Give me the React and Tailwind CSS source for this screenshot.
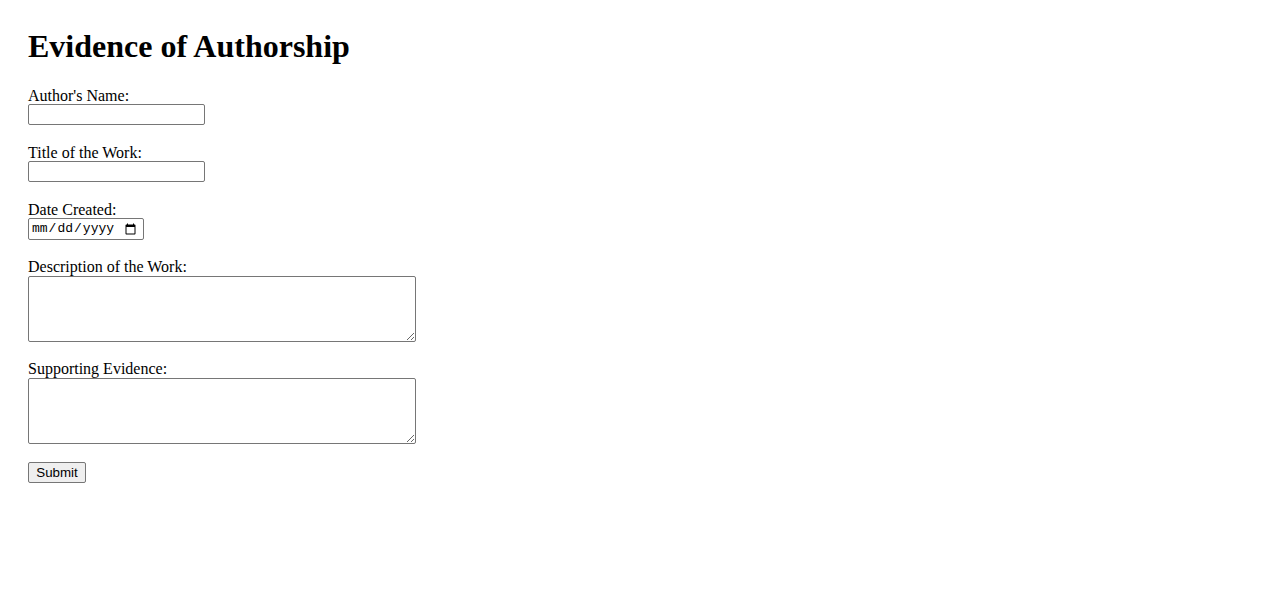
const serif = { fontFamily: '"Liberation Serif", "Times New Roman", serif' }

const Field = ({ label, children, className = '' }) => {
  return (
    <div className={`flex flex-col items-start ${className}`}>
      <label className="block pt-[3px] text-[16px] leading-[15px] text-black">{label}</label>
      {children}
    </div>
  )
}

const inputCls =
  'mt-[1px] h-[21px] w-[177px] rounded-[2px] border border-[#767676] bg-white px-[2px] text-[13.33px] outline-none'

const App = () => {
  return (
    <div className="min-h-screen bg-white pl-[28px] pt-[28px] text-black" style={serif}>
      <h1 className="mb-[20px] text-[32px] font-bold leading-[37px]">Evidence of Authorship</h1>

      <form className="flex flex-col items-start">
        {/* name */}
        <Field label="Author's Name:">
          <input type="text" className={inputCls} />
        </Field>

        {/* title */}
        <Field label="Title of the Work:" className="mt-[17px]">
          <input type="text" className={inputCls} />
        </Field>

        {/* date */}
        <Field label="Date Created:" className="mt-[17px]">
          <input
            type="date"
            className="mt-[1px] h-[22px] w-[116px] rounded-[2px] border border-[#767676] bg-white pl-[2px] pr-[4px] text-[13px] outline-none"
            style={{ fontFamily: '"Liberation Mono", "DejaVu Sans Mono", monospace' }}
          />
        </Field>

        {/* description */}
        <Field label="Description of the Work:" className="mt-[16px]">
          <textarea className="mt-[2px] h-[66px] w-[388px] rounded-[2px] border border-[#767676] bg-white p-[2px] text-[13px] outline-none" />
        </Field>

        {/* evidence */}
        <Field label="Supporting Evidence:" className="mt-[16px]">
          <textarea className="mt-[2px] h-[66px] w-[388px] rounded-[2px] border border-[#767676] bg-white p-[2px] text-[13px] outline-none" />
        </Field>

        <button
          type="submit"
          className="mt-[18px] h-[21px] w-[58px] rounded-[2px] border border-[#767676] bg-[#efefef] text-[13.33px] leading-none text-black"
          style={{ fontFamily: '"Liberation Sans", Arial, sans-serif' }}
        >
          Submit
        </button>
      </form>
    </div>
  )
}

export default App
